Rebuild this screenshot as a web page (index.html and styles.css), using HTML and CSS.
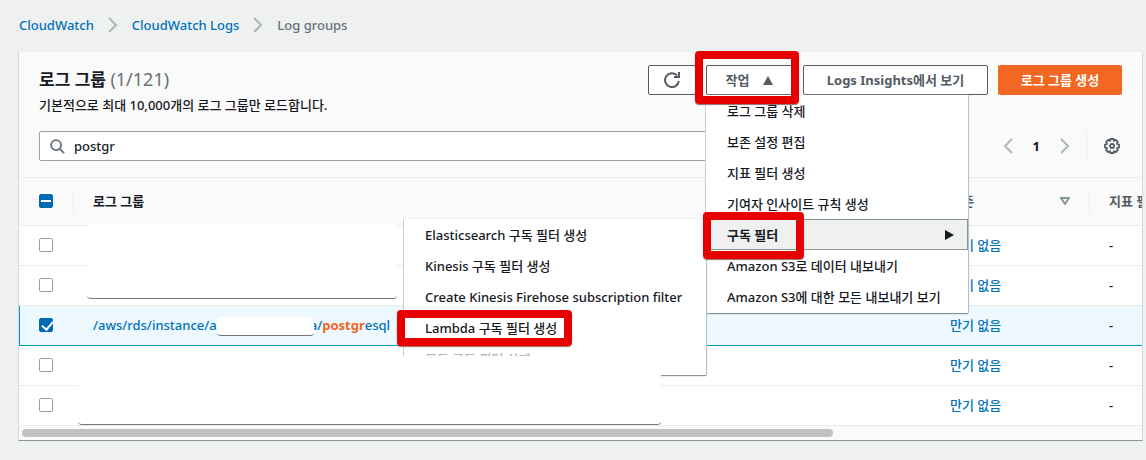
FILE: index.html
```html
<!DOCTYPE html>
<html lang="ko">
<head>
<meta charset="utf-8">
<title>CloudWatch Log groups</title>
<link rel="stylesheet" href="styles.css">
</head>
<body>
<nav class="crumbs" aria-label="Breadcrumb">
  <a href="#">CloudWatch</a>
  <svg class="chev" viewBox="0 0 10 16"><path d="M1 1l7 7-7 7"/></svg>
  <a href="#">CloudWatch Logs</a>
  <svg class="chev" viewBox="0 0 10 16"><path d="M1 1l7 7-7 7"/></svg>
  <span>Log groups</span>
</nav>
<main class="panel">
  <header class="head">
    <div class="heading">
      <h1>로그 그룹 <span class="count">(1/121)</span></h1>
      <p>기본적으로 최대 10,000개의 로그 그룹만 로드합니다.</p>
    </div>
    <div class="actions">
      <button class="btn refresh" aria-label="새로 고침"><svg viewBox="0 0 16 16"><path d="M14.8 9A6.9 6.9 0 1 1 13 3.4"/><path class="fill" d="M16 0v6h-6V4h4V0z"/></svg></button>
      <div class="dropdown">
        <button class="btn action" aria-expanded="true">작업 <svg viewBox="0 0 10 9"><path d="M5 0l5 9H0z"/></svg></button>
        <span class="frame frame-button"></span>
        <ul class="menu">
          <li><button>로그 그룹 삭제</button></li>
          <li><button>보존 설정 편집</button></li>
          <li><button>지표 필터 생성</button></li>
          <li><button>기여자 인사이트 규칙 생성</button></li>
          <li class="current">
            <button>구독 필터 <svg viewBox="0 0 9 10"><path d="M0 0l9 5-9 5z"/></svg></button>
            <span class="frame frame-item"></span>
            <ul class="menu submenu">
              <li><button>Elasticsearch 구독 필터 생성</button></li>
              <li><button>Kinesis 구독 필터 생성</button></li>
              <li><button>Create Kinesis Firehose subscription filter</button></li>
              <li><button>Lambda 구독 필터 생성</button><span class="frame frame-lambda"></span></li>
              <li><button disabled>모두 구독 필터 삭제</button></li>
            </ul>
          </li>
          <li><button>Amazon S3로 데이터 내보내기</button></li>
          <li><button>Amazon S3에 대한 모든 내보내기 보기</button></li>
        </ul>
      </div>
      <button class="btn insights">Logs Insights에서 보기</button>
      <button class="btn primary">로그 그룹 생성</button>
    </div>
  </header>
  <div class="tools">
    <label class="search">
      <svg viewBox="0 0 16 16"><circle cx="6.5" cy="6.5" r="5.3"/><path d="M10.3 10.3l4.7 4.7"/></svg>
      <input type="text" value="postgr" aria-label="로그 그룹 검색">
    </label>
    <div class="pages">
      <button aria-label="이전"><svg class="chev" viewBox="0 0 10 16"><path d="M9 1L2 8l7 7"/></svg></button>
      <b>1</b>
      <button aria-label="다음"><svg class="chev" viewBox="0 0 10 16"><path d="M1 1l7 7-7 7"/></svg></button>
      <button class="gear" aria-label="설정"><svg viewBox="0 0 16 16"><path d="M6.6 1h2.8l.6 1.7 1.8-.8 2 2-.8 1.8 2 .9v2.8l-2 .9.8 1.8-2 2-1.8-.8-.6 1.7H6.6L6 13.3l-1.8.8-2-2 .8-1.8-2-.9V6.6l2-.9-.8-1.8 2-2 1.8.8z"/><circle cx="8" cy="8" r="2"/></svg></button>
    </div>
  </div>
  <div class="scroller">
    <table>
      <colgroup><col class="c-check"><col class="c-name"><col class="c-keep"><col></colgroup>
      <thead>
        <tr>
          <th><input type="checkbox" class="mixed" aria-label="모두 선택"></th>
          <th><div class="th">로그 그룹</div></th>
          <th><div class="th plain">보존 <svg viewBox="0 0 10 8"><path d="M1 1h8L5 7z"/></svg></div></th>
          <th><div class="th">지표 필터</div></th>
        </tr>
      </thead>
      <tbody>
        <tr><td><input type="checkbox" aria-label="행 1"></td><td></td><td><a href="#">만기 없음</a></td><td>-</td></tr>
        <tr><td><input type="checkbox" aria-label="행 2"></td><td></td><td><a href="#">만기 없음</a></td><td>-</td></tr>
        <tr class="selected"><td><input type="checkbox" checked aria-label="행 3"></td><td><a href="#">/aws/rds/instance/a<span class="hide hide-name"></span>a/<mark>postgr</mark>esql</a></td><td><a href="#">만기 없음</a></td><td>-</td></tr>
        <tr><td><input type="checkbox" aria-label="행 4"></td><td></td><td><a href="#">만기 없음</a></td><td>-</td></tr>
        <tr><td><input type="checkbox" aria-label="행 5"></td><td></td><td><a href="#">만기 없음</a></td><td>-</td></tr>
      </tbody>
    </table>
  </div>
  <div class="track"><div class="thumb"></div></div>
  <div class="hide hide-top"></div>
  <div class="hide hide-bottom"></div>
</main>
</body>
</html>
```
FILE: styles.css
```css
* { box-sizing: border-box; }
body {
  margin: 0;
  padding: 15px 3px 20px 18px;
  background: #eff1f1;
  color: #16191f;
  font: 500 13px/20px "Noto Sans", "Noto Sans CJK KR", sans-serif;
}
a { color: #0073bb; text-decoration: none; }
button, input { font: inherit; color: inherit; }
button { border: 0; padding: 0; background: none; }
svg { display: block; fill: none; stroke: currentColor; stroke-width: 2; }

.crumbs { display: flex; align-items: center; gap: 14px; margin: 0 1px 16px; color: #687078; }
.chev { width: 10px; height: 16px; color: #aab7b8; }

.panel {
  position: relative;
  background: #fafafa;
  border: 1px solid #d5dbdb;
  border-top-color: #eaeded;
  border-bottom-color: #879596;
}
.head { display: flex; justify-content: space-between; padding: 13px 20px 0; }
h1 { margin: 0; font-size: 17px; line-height: 30px; font-weight: 700; }
.count { font-size: 18px; line-height: 20px; font-weight: 400; color: #687078; }
p { margin: 0; }
.actions { display: flex; gap: 10px; height: 30px; }
.btn {
  display: flex;
  align-items: center;
  justify-content: center;
  height: 30px;
  border: 1px solid #545b64;
  border-radius: 2px;
  background: #fff;
  color: #545b64;
  font-weight: 700;
  white-space: nowrap;
}
.refresh { width: 48px; }
.refresh svg { width: 16px; height: 16px; }
.refresh .fill { fill: currentColor; stroke: none; }
.action { width: 87px; gap: 14px; }
.action svg { width: 10px; height: 9px; fill: currentColor; stroke: none; }
.insights { width: 185px; }
.primary { width: 124px; background: #f26722; border-color: #f26722; color: #fff; }

.dropdown { position: relative; z-index: 2; }
.menu {
  position: absolute;
  top: 30px;
  left: 0;
  width: 262px;
  margin: 0;
  padding: 0 0 1px;
  list-style: none;
  background: #fff;
  box-shadow: 0 1px 1px #879596, 1px 0 1px #c5cccc, -1px 0 0 #d5dbdb;
}
.menu li { position: relative; }
.menu button {
  display: flex;
  align-items: center;
  justify-content: space-between;
  width: 100%;
  height: 31px;
  padding: 0 14px 0 21px;
  white-space: nowrap;
  text-align: left;
}
.menu button:disabled { color: #aab7b8; }
.current > button { background: #eff1f1; outline: 1px solid #879596; outline-offset: -1px; font-weight: 700; }
.current svg { width: 9px; height: 10px; fill: #16191f; stroke: none; }
.menu .submenu { top: 0; left: -302px; width: 302px; }

.frame { position: absolute; z-index: 3; border: 8px solid #e60000; border-radius: 4px; box-shadow: 0 1px 1px #9a6a6a; pointer-events: none; }
.frame-button { inset: -14px -6px -9px -11px; }
.frame-item { top: -7px; left: -3px; width: 101px; height: 47px; }
.frame-lambda { top: -2px; left: -7px; width: 175px; height: 36px; }

.tools { display: flex; align-items: center; padding: 16px 20px; gap: 56px; }
.search { display: flex; align-items: center; flex: 1; height: 30px; padding: 0 10px; gap: 9px; background: #fff; border: 1px solid #95a5a6; border-radius: 2px; }
.search svg { width: 15px; height: 15px; color: #687078; }
.search input { flex: 1; min-width: 0; border: 0; padding: 0; background: none; outline: 0; font-size: 13px; }
.pages { display: flex; align-items: center; height: 30px; gap: 20px; padding-right: 2px; }
.gear { height: 30px; padding-left: 17px; border-left: 1px solid #eaeded; color: #545b64; margin-left: -4px; }
.gear svg { width: 16px; height: 16px; stroke-width: 1.8; }

.scroller { overflow: hidden; border-top: 1px solid #eaeded; }
table { width: 1555px; table-layout: fixed; border-collapse: collapse; background: #fff; }
.c-check { width: 54px; }
.c-name { width: 857px; }
.c-keep { width: 159px; }
th, td { padding: 0 20px; text-align: left; border-bottom: 1px solid #eaeded; }
th { height: 47px; padding: 0; background: #fafafa; color: #545b64; font-weight: 700; }
th:first-child, td:first-child { padding: 0 0 0 20px; }
th:nth-child(2) { color: #16191f; }
.th { display: flex; align-items: center; justify-content: space-between; height: 23px; padding: 0 19px; border-left: 1px solid #eaeded; }
.plain { border-color: transparent; }
.th svg { width: 10px; height: 8px; stroke: #879596; }
td { height: 40px; }
.selected td { background: #edf8ff; border-top: 1px solid #0099c0; border-bottom: 1px solid #0099c0; }
.selected td:first-child { box-shadow: inset 1px 0 #0099c0; }
mark { background: none; color: #f26722; font-weight: 700; }

input[type="checkbox"] { display: block; appearance: none; width: 14px; height: 14px; margin: 0; border: 1px solid #95a5a6; border-radius: 2px; background: #fff; position: relative; }
input[type="checkbox"]:checked, input.mixed { background: #006bb5; border-color: #006bb5; }
input.mixed::after { content: ""; position: absolute; inset: 5px 1px; background: #fff; }
input:checked::after { content: ""; position: absolute; left: 4px; top: 0; width: 5px; height: 9px; border: solid #fff; border-width: 0 2px 2px 0; transform: rotate(40deg); }

.track { height: 14px; padding: 3px; }
.thumb { width: 811px; max-width: 100%; height: 8px; border-radius: 4px; background: #c1c1c1; }

.hide { background: #fff; border-bottom: 1px solid #777; border-radius: 4px; }
.hide-name { display: inline-block; position: relative; width: 97px; height: 19px; margin: 0 -4px 0 0; vertical-align: middle; }
.hide-top { position: absolute; left: 68px; bottom: 141px; width: 310px; height: 75px; }
.hide-bottom { position: absolute; z-index: 4; left: 59px; bottom: 15px; width: 583px; height: 69px; }
```
